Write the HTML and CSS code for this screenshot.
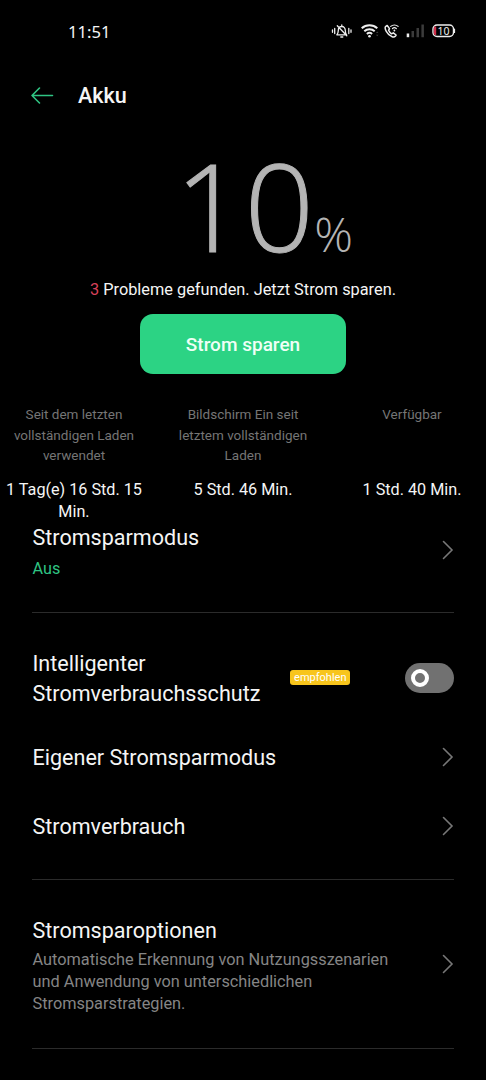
FILE: index.html
```html
<!DOCTYPE html>
<html lang="de">
<head>
<meta charset="utf-8">
<title>Akku</title>
<link rel="stylesheet" href="styles.css">
</head>
<body>
<div class="screen">
  <div class="status">
    <span class="time">11:51</span>
    <svg class="status-icons" viewBox="0 0 130 20" fill="none" stroke="#eee" stroke-linecap="round" stroke-linejoin="round">
      <g stroke-width="1.3">
        <path d="M2.500 9.800v2.500M4.700 8.500v5M18.800 8.500v5M21 9.800v2.500"/>
        <path d="M6.800 14.800h9.800c-1-1.200-1.300-2-1.300-4.300 0-2.400-1.400-4-3.500-4s-3.500 1.600-3.500 4c0 2.300-.5 3.100-1.500 4.300M10.800 17h2M11.800 5V6M7.300 5.800l9.500 10"/>
      </g>
      <g stroke-width="2" stroke-linecap="butt">
        <path d="M31.700 8.200a11.500 11.500 0 0 1 15.600 0M34.300 11.200a7.600 7.600 0 0 1 10.400 0M36.900 13.900a3.900 3.900 0 0 1 5.200 0"/>
      </g>
      <circle cx="39.500" cy="16.200" r="1.300" fill="#eee" stroke="none"/>
      <path d="M46 13l1.200-1.500L48.400 13zM46 14.800l1.200 1.500 1.200-1.500z" fill="#444" stroke="none"/>
      <path stroke-width="1.500" d="M57.200 5.500l-1.400.8c-.9.8-.8 2.700.5 5 1.400 2.500 3.700 4.700 5.900 5.500 1.400.5 2.500.2 3.300-.8l.6-1-2.800-2.200-1.700 1c-1.300-.8-2.500-2.200-3-3.500l.9-1.700z"/>
      <path stroke-width="1.200" d="M60.700 6.400a5.600 5.600 0 0 1 7.400 0M62.500 8.500a2.900 2.900 0 0 1 3.800 0"/>
      <circle cx="64.400" cy="10.500" r=".9" fill="#eee" stroke="none"/>
      <g stroke="none">
        <path fill="#eee" d="M76.700 13.500h2.500v3.700h-2.500z"/>
        <path fill="#3b3b3b" d="M81.500 11h2.500v6.200h-2.500zM86.500 8h2.500v9.200h-2.500zM91.400 4.500h2.500v12.700h-2.500z"/>
      </g>
      <rect x="103" y="5" width="20.500" height="11.500" rx="4" stroke-width="1.400"/>
      <path d="M104.800 6.400h1.400v8.700h-1.400c-1-.8-1-1.500-1-2.500V9c0-1 0-1.800 1-2.600z" fill="#d3304c" stroke="none"/>
      <path d="M124.500 9v3.500" stroke-width="1.200"/>
      <text class="battery-text" x="107.500" y="14.500">10</text>
    </svg>
  </div>
  <header class="header">
    <svg class="back" viewBox="0 0 24 20" fill="none" stroke="#2fc483" stroke-width="1.600" stroke-linecap="round" stroke-linejoin="round"><path d="M22.500 10.500H2M9.500 3L2 10.500 9.500 18"/></svg>
    <h1 class="title">Akku</h1>
  </header>
  <section class="summary">
    <div class="level"><span class="digits">10</span><span class="percent">%</span></div>
    <p class="message"><span class="count">3</span> Probleme gefunden. Jetzt Strom sparen.</p>
    <button class="save">Strom sparen</button>
  </section>
  <section class="stats">
    <div class="stat"><div class="label">Seit dem letzten<br>vollständigen Laden<br>verwendet</div><div class="value">1 Tag(e) 16 Std. 15<br>Min.</div></div>
    <div class="stat"><div class="label">Bildschirm Ein seit<br>letztem vollständigen<br>Laden</div><div class="value">5 Std. 46 Min.</div></div>
    <div class="stat"><div class="label">Verfügbar</div><div class="value">1 Std. 40 Min.</div></div>
  </section>
  <main class="list">
    <div class="row mode">
      <div class="text"><div class="name">Stromsparmodus</div><div class="state">Aus</div></div>
      <svg class="chevron" viewBox="0 0 12 20"><path d="M1.500 1.500L10 10 1.500 18.500"/></svg>
    </div>
    <div class="row smart">
      <div class="name">Intelligenter<br>Stromverbrauchsschutz</div>
      <span class="badge">empfohlen</span>
      <span class="toggle"><span class="knob"></span></span>
    </div>
    <div class="row single"><div class="name">Eigener Stromsparmodus</div><svg class="chevron" viewBox="0 0 12 20"><path d="M1.500 1.500L10 10 1.500 18.500"/></svg></div>
    <div class="row single usage"><div class="name">Stromverbrauch</div><svg class="chevron" viewBox="0 0 12 20"><path d="M1.500 1.500L10 10 1.500 18.500"/></svg></div>
    <div class="row options">
      <div class="text"><div class="name">Stromsparoptionen</div><div class="desc">Automatische Erkennung von Nutzungsszenarien<br>und Anwendung von unterschiedlichen<br>Stromsparstrategien.</div></div>
      <svg class="chevron" viewBox="0 0 12 20"><path d="M1.500 1.500L10 10 1.500 18.500"/></svg>
    </div>
  </main>
</div>
</body>
</html>
```
FILE: styles.css
```css
* { box-sizing: border-box; }
body { margin: 0; background: #000; color: #f5f5f5; font-family: Roboto, sans-serif; }
.screen { width: 486px; height: 1080px; overflow: hidden; background: #000; }

.status { display: flex; justify-content: space-between; height: 62px; padding: 20px 26px 0 68px; }
.time { font: 16.600px/24px "Noto Sans", sans-serif; }
.status-icons { width: 130px; height: 20px; }
.battery-text { font: 10.500px "Noto Sans", sans-serif; fill: #eee; stroke: none; }

.header { display: flex; align-items: center; height: 66px; padding-left: 30px; }
.back { width: 24px; height: 20px; }
.title { margin: 0 0 0 24px; padding-top: 2px; font-size: 21.600px; font-weight: 500; line-height: 30px; }

.summary { display: flex; flex-direction: column; align-items: center; height: 276px; }
.level { display: flex; align-items: baseline; height: 150px; padding-left: 42px; color: #b4b4b4; font-weight: 300; line-height: 154px; }
.digits { font-family: "Open Sans", sans-serif; font-size: 122px; -webkit-text-stroke: 1px #b4b4b4; }
.percent { font-family: "Open Sans", sans-serif; font-size: 48px; line-height: 50px; }
.message { margin: 0; padding-top: 1px; font-size: 16.320px; line-height: 22px; white-space: nowrap; }
.count { color: #d8405a; }
.save { width: 206px; height: 60px; margin: 13px 0 0; border: 0; border-radius: 13px; background: #2cd384; color: #effff6; font: 500 19px Roboto, sans-serif; }

.stats { display: grid; grid-template-columns: 148px 190px 148px; height: 118px; text-align: center; white-space: nowrap; }
.label { height: 75px; color: #757575; font-size: 13.500px; line-height: 20.700px; }
.value { font-size: 16.200px; line-height: 22px; }

.list { padding: 0 32px; }
.row { display: flex; align-items: center; justify-content: space-between; }
.name { font-size: 21.560px; line-height: 29.500px; white-space: nowrap; }
.text, .smart .name, .single .name { padding-left: .5px; }
.chevron { width: 12px; height: 20px; fill: none; stroke: #777; stroke-width: 1.600; stroke-linecap: round; }
.mode { height: 91px; padding-bottom: 34px; border-bottom: 1px solid #2b2b2b; }
.mode .text { padding-top: 7px; }
.state { font-size: 16.200px; line-height: 31px; color: #2fc483; }
.smart { height: 109px; padding-top: 20px; }
.smart .name { padding-top: 2px; }
.badge { width: 60px; height: 15px; margin-left: 30px; border-radius: 3px; background: #f8c51c; color: #fff; font-size: 11px; line-height: 16px; text-align: center; }
.toggle { display: flex; align-items: center; width: 49px; height: 30px; margin-left: 55px; padding-left: 6px; border-radius: 15px; background: #717171; }
.knob { width: 18px; height: 18px; border: 4px solid #fff; border-radius: 50%; }
.single { height: 69px; }
.single .name { padding-top: 2px; }
.usage { height: 89px; padding-bottom: 19px; border-bottom: 1px solid #2b2b2b; }
.options { height: 169px; border-bottom: 1px solid #2b2b2b; }
.options .text { padding-top: 3px; }
.desc { padding-top: 4px; color: #858585; font-size: 16.320px; line-height: 22px; white-space: nowrap; }
```
